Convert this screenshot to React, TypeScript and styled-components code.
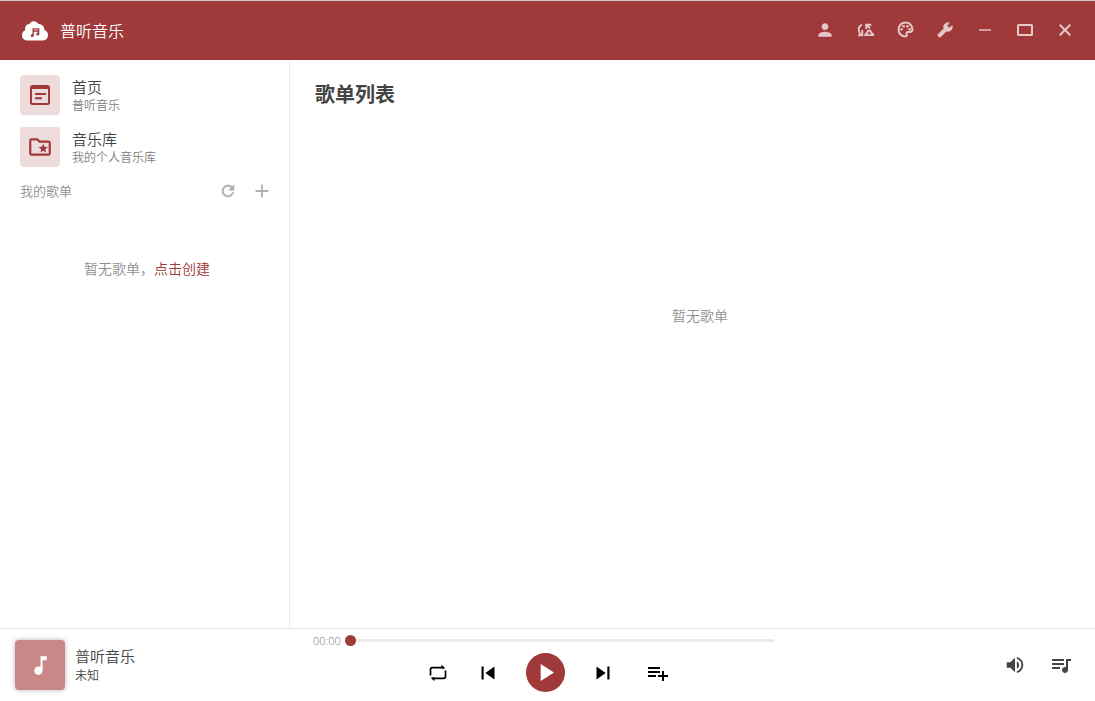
import React from "react";
import styled, { createGlobalStyle } from "styled-components";
import {
  MdAdd,
  MdMusicNote,
  MdOutlineFolderSpecial,
  MdPerson,
  MdPlayArrow,
  MdQueueMusic,
  MdSkipNext,
  MdSkipPrevious,
  MdVolumeUp,
} from "react-icons/md";

const red = "#a03939";

const GlobalStyle = createGlobalStyle`
  * { box-sizing: border-box; }
  body {
    margin: 0;
    background: #fff;
    color: #444;
    font-family: "Open Sans", "Noto Sans CJK SC", sans-serif;
    font-weight: 350;
  }
  button {
    margin: 0;
    padding: 0;
    border: 0;
    background: none;
    color: inherit;
    font: inherit;
    cursor: pointer;
  }
  svg { display: block; }
`;

const Shell = styled.div`
  display: flex;
  flex-direction: column;
  min-height: 100vh;
`;

const TitleBar = styled.header`
  display: flex;
  align-items: center;
  justify-content: space-between;
  height: 60px;
  padding: 0 10px 0 20px;
  border-top: 1px solid #cdc9cb;
  background: ${red};
  color: #fff;
`;

const Brand = styled.div`
  display: flex;
  align-items: center;
  gap: 10px;
  font-size: 16px;
  line-height: 24px;
`;

const WindowTools = styled.nav`
  display: flex;
  padding-bottom: 2px;
  color: #e6c8c8;
`;

const IconButton = styled.button<{ $width: number }>`
  display: flex;
  align-items: center;
  justify-content: center;
  width: ${(p) => p.$width}px;
  height: ${(p) => p.$width}px;
`;

const Body = styled.div`
  display: flex;
  flex: 1;
`;

const Sidebar = styled.aside`
  width: 290px;
  padding: 15px 15px 0 20px;
  border-right: 1px solid #ebebeb;
`;

const Menu = styled.nav`
  display: flex;
  flex-direction: column;
  gap: 12px;
`;

const MenuItem = styled.a`
  display: flex;
  gap: 12px;
  color: inherit;
  text-decoration: none;
`;

const MenuIcon = styled.span`
  display: flex;
  align-items: center;
  justify-content: center;
  width: 40px;
  height: 40px;
  border-radius: 4px;
  background: #eedbdb;
  color: ${red};
`;

const MenuTitle = styled.span`
  display: block;
  font-size: 15px;
  line-height: 24px;
`;

const MenuHint = styled.span`
  display: block;
  color: #808080;
  font-size: 12px;
  line-height: 14px;
`;

const ListHeader = styled.div`
  display: flex;
  align-items: center;
  justify-content: space-between;
  margin-top: 12px;
  color: #909090;
`;

const ListTitle = styled.h2`
  margin: 0;
  font-size: 13px;
  font-weight: inherit;
  line-height: 24px;
`;

const ListTools = styled.div`
  display: flex;
  gap: 10px;
  color: #b0b0b0;
`;

const EmptyList = styled.p`
  margin: 56px 0 0;
  color: #909090;
  font-size: 14px;
  line-height: 20px;
  text-align: center;
`;

const CreateLink = styled.button`
  && {
    color: ${red};
  }
`;

const Content = styled.main`
  display: flex;
  flex: 1;
  flex-direction: column;
  padding: 20px 10px 0 25px;
`;

const Heading = styled.h1`
  margin: 0;
  font-size: 20px;
  font-weight: 700;
  line-height: 30px;
`;

const EmptyContent = styled.p`
  margin: 196px 0 0;
  color: #909090;
  font-size: 14px;
  line-height: 20px;
  text-align: center;
`;

const Player = styled.footer`
  display: grid;
  grid-template-columns: 300px 1fr 295px;
  height: 73px;
  border-top: 1px solid #e8e8e8;
`;

const Track = styled.div`
  display: flex;
  align-items: center;
  gap: 10px;
  padding-left: 15px;
`;

const Cover = styled.div`
  display: flex;
  align-items: center;
  justify-content: center;
  width: 50px;
  height: 50px;
  border-radius: 4px;
  background: #c88888;
  box-shadow: 0 0 5px rgba(0, 0, 0, 0.3);
  color: #fff;
`;

const TrackText = styled.div`
  padding-top: 2px;
`;

const TrackTitle = styled.div`
  font-size: 15px;
  line-height: 20px;
`;

const TrackArtist = styled.div`
  font-size: 12px;
  line-height: 20px;
`;

const Center = styled.div`
  display: flex;
  flex-direction: column;
  gap: 2px;
`;

const SeekRow = styled.div`
  display: flex;
  align-items: center;
  height: 22px;
  padding: 0 26px 0 13px;
  color: #777;
  font-size: 11px;
`;

const Time = styled.span`
  width: 32px;
`;

const Seek = styled.input`
  flex: 1;
  min-width: 0;
  height: 11px;
  margin: 0;
  appearance: none;
  background: linear-gradient(#ebebeb, #ebebeb) center / 100% 3px no-repeat;

  &::-webkit-slider-thumb {
    width: 11px;
    height: 11px;
    border-radius: 50%;
    appearance: none;
    background: ${red};
  }
`;

const Controls = styled.div`
  display: flex;
  align-items: center;
  justify-content: center;
  gap: 24px;
  color: #000;
`;

const PlayButton = styled(IconButton)`
  border-radius: 50%;
  background: ${red};
  color: #fff;
`;

const Extras = styled.div`
  display: flex;
  align-items: center;
  justify-content: flex-end;
  gap: 22px;
  padding-right: 22px;
`;

const CloudLogo = () => (
  <svg width="30" height="24" viewBox="0 0 30 24" fill="none">
    <path
      fill="#fff"
      d="M8 21.500C4.500 21.500 2 19.300 2 16.400c0-2.600 1.300-4.500 3.200-5.100C4.600 7.500 6.600 5.200 9.500 5c1-1.700 2.300-2.700 4.100-2.700 2 0 3.600 1 4.600 2.700 3.600-.2 6.200 2.300 6.200 5.900 2.300.8 3.600 2.600 3.600 5 0 3.200-2.200 5.600-5.700 5.600z"
    />
    <path stroke={red} strokeWidth="1.400" d="M13.200 16.500V9.900h5.400v5M13.200 12h5.400" />
    <circle cx="12.200" cy="16.500" r="1.500" fill={red} />
    <circle cx="17.700" cy="15" r="1.500" fill={red} />
  </svg>
);

const SwitchUser = () => (
  <svg width="18" height="14" viewBox="0 0 18 14" fill="none" stroke="currentColor" strokeWidth="1.900">
    <g transform="translate(1 0)">
      <path d="M5 1.800C.7 3.200.7 8.500 4 11.800M5.300 7v5.200H1" />
      <path d="M14.300 1.800H9.200V6M9.500 2l3.500 3.300" />
      <path d="M12.200 7.500c2.500 0 1.500 2 2.300 2.600q1.800.8 1.800 2H8.200q0-1.200 1.800-2c.8-.6-.3-2.600 2.200-2.600z" />
    </g>
  </svg>
);

const Palette = () => (
  <svg width="19" height="19" viewBox="0 0 24 24" fill="currentColor">
    <path
      fill="none"
      stroke="currentColor"
      strokeWidth="2.500"
      d="M12 3.200a8.800 8.800 0 0 0 0 17.600c1.500 0 2.200-1.300 1.500-2.500-.8-1.500.2-3 1.700-3h2.300a3.300 3.300 0 0 0 3.300-3.300c0-4.900-3.900-8.800-8.800-8.800z"
    />
    <circle cx="7" cy="11.700" r="1.600" />
    <circle cx="9.600" cy="7.800" r="1.600" />
    <circle cx="14.400" cy="7.800" r="1.600" />
    <circle cx="17.200" cy="11.700" r="1.600" />
  </svg>
);

const Wrench = () => (
  <svg width="16" height="16" viewBox="0 0 24 24" fill="currentColor" stroke="currentColor">
    <path d="M1.300 19l9.100-9.100c-.9-2.300-.4-5 1.500-6.900 2-2 4-2.400 6.400-1.700L15 5.500l3.500 3.500 4.200-3.500c.7 2.400.2 4.600-1.600 6.600-1.900 1.900-4.600 2.400-6.900 1.500l-9.100 9.100c-.4.4-1 .4-1.400 0l-2.300-2.300c-.5-.4-.5-1.100-.1-1.400z" />
  </svg>
);

const Minimize = () => (
  <svg width="14" height="14" viewBox="0 0 14 14" stroke="currentColor" strokeWidth="1.400">
    <path d="M1 7h12" />
  </svg>
);

const Maximize = () => (
  <svg width="16" height="12" viewBox="0 0 16 12" fill="none" stroke="currentColor" strokeWidth="2">
    <rect x="1" y="1" width="14" height="10" rx=".5" />
  </svg>
);

const Close = () => (
  <svg width="12" height="12" viewBox="0 0 12 12" stroke="currentColor" strokeWidth="2">
    <path d="M.7.700l10.600 10.600M11.300.7L.7 11.300" />
  </svg>
);

const PageIcon = () => (
  <svg width="20" height="20" viewBox="0 0 20 20" fill="none" stroke="currentColor" strokeWidth="2">
    <rect x="1" y="1" width="18" height="18" rx="1.500" />
    <path d="M1 3h18M5 9h11M5 13.200h7" />
  </svg>
);

const Refresh = () => (
  <svg width="18" height="18" viewBox="0 0 24 24" fill="currentColor" stroke="currentColor" strokeWidth=".8">
    <path d="M17.650 6.350C16.200 4.900 14.210 4 12 4c-4.420 0-7.990 3.580-7.990 8s3.570 8 7.990 8c3.730 0 6.840-2.550 7.730-6h-2.080c-.82 2.330-3.040 4-5.650 4-3.310 0-6-2.690-6-6s2.690-6 6-6c1.660 0 3.140.69 4.220 1.780L13 11h7V4l-2.350 2.350z" />
  </svg>
);

const Repeat = () => (
  <svg width="18" height="18" viewBox="0 0 18 18" fill="none" stroke="currentColor" strokeWidth="1.700">
    <path d="M1.500 11.500V5.500Q1.500 3.700 3.300 3.700H15M16.500 6.500v6q0 1.800-1.800 1.800H3" />
    <path fill="currentColor" stroke="none" d="M12.500.8L16.500 4.500h-4zM5.500 17.200L1.500 13.500h4z" />
  </svg>
);

const ListAdd = () => (
  <svg width="24" height="24" viewBox="0 0 24 24" fill="currentColor">
    <path d="M14 10H2v2h12v-2zm0-4H2v2h12V6zm4 8v-4h-2v4h-4v2h4v4h2v-4h4v-2h-4zM2 16h8v-2H2v2z" />
  </svg>
);

const windowTools = [
  { label: "用户", icon: <MdPerson size={20} /> },
  { label: "切换账号", icon: <SwitchUser /> },
  { label: "主题", icon: <Palette /> },
  { label: "设置", icon: <Wrench /> },
  { label: "最小化", icon: <Minimize /> },
  { label: "最大化", icon: <Maximize /> },
  { label: "关闭", icon: <Close /> },
];

const menu = [
  { title: "首页", hint: "普听音乐", icon: <PageIcon /> },
  { title: "音乐库", hint: "我的个人音乐库", icon: <MdOutlineFolderSpecial size={26} /> },
];

export default function App() {
  return (
    <Shell>
      <GlobalStyle />
      <TitleBar>
        <Brand>
          <CloudLogo />
          普听音乐
        </Brand>
        <WindowTools>
          {windowTools.map((t) => (
            <IconButton key={t.label} $width={40} aria-label={t.label}>
              {t.icon}
            </IconButton>
          ))}
        </WindowTools>
      </TitleBar>
      <Body>
        <Sidebar>
          <Menu>
            {menu.map((m) => (
              <MenuItem key={m.title} href="#">
                <MenuIcon>{m.icon}</MenuIcon>
                <span>
                  <MenuTitle>{m.title}</MenuTitle>
                  <MenuHint>{m.hint}</MenuHint>
                </span>
              </MenuItem>
            ))}
          </Menu>
          <ListHeader>
            <ListTitle>我的歌单</ListTitle>
            <ListTools>
              <IconButton $width={24} aria-label="刷新">
                <Refresh />
              </IconButton>
              <IconButton $width={24} aria-label="新建歌单">
                <MdAdd size={22} />
              </IconButton>
            </ListTools>
          </ListHeader>
          <EmptyList>
            暂无歌单，<CreateLink>点击创建</CreateLink>
          </EmptyList>
        </Sidebar>
        <Content>
          <Heading>歌单列表</Heading>
          <EmptyContent>暂无歌单</EmptyContent>
        </Content>
      </Body>
      <Player>
        <Track>
          <Cover>
            <MdMusicNote size={25} />
          </Cover>
          <TrackText>
            <TrackTitle>普听音乐</TrackTitle>
            <TrackArtist>未知</TrackArtist>
          </TrackText>
        </Track>
        <Center>
          <SeekRow>
            <Time>00:00</Time>
            <Seek type="range" min={0} max={100} defaultValue={0} aria-label="播放进度" />
          </SeekRow>
          <Controls>
            <IconButton $width={24} aria-label="循环播放">
              <Repeat />
            </IconButton>
            <IconButton $width={28} aria-label="上一首">
              <MdSkipPrevious size={26} />
            </IconButton>
            <PlayButton $width={39} aria-label="播放">
              <MdPlayArrow size={29} />
            </PlayButton>
            <IconButton $width={28} aria-label="下一首">
              <MdSkipNext size={26} />
            </IconButton>
            <IconButton $width={34} aria-label="添加到歌单">
              <ListAdd />
            </IconButton>
          </Controls>
        </Center>
        <Extras>
          <IconButton $width={24} aria-label="音量">
            <MdVolumeUp size={22} />
          </IconButton>
          <IconButton $width={24} aria-label="播放列表">
            <MdQueueMusic size={24} />
          </IconButton>
        </Extras>
      </Player>
    </Shell>
  );
}
